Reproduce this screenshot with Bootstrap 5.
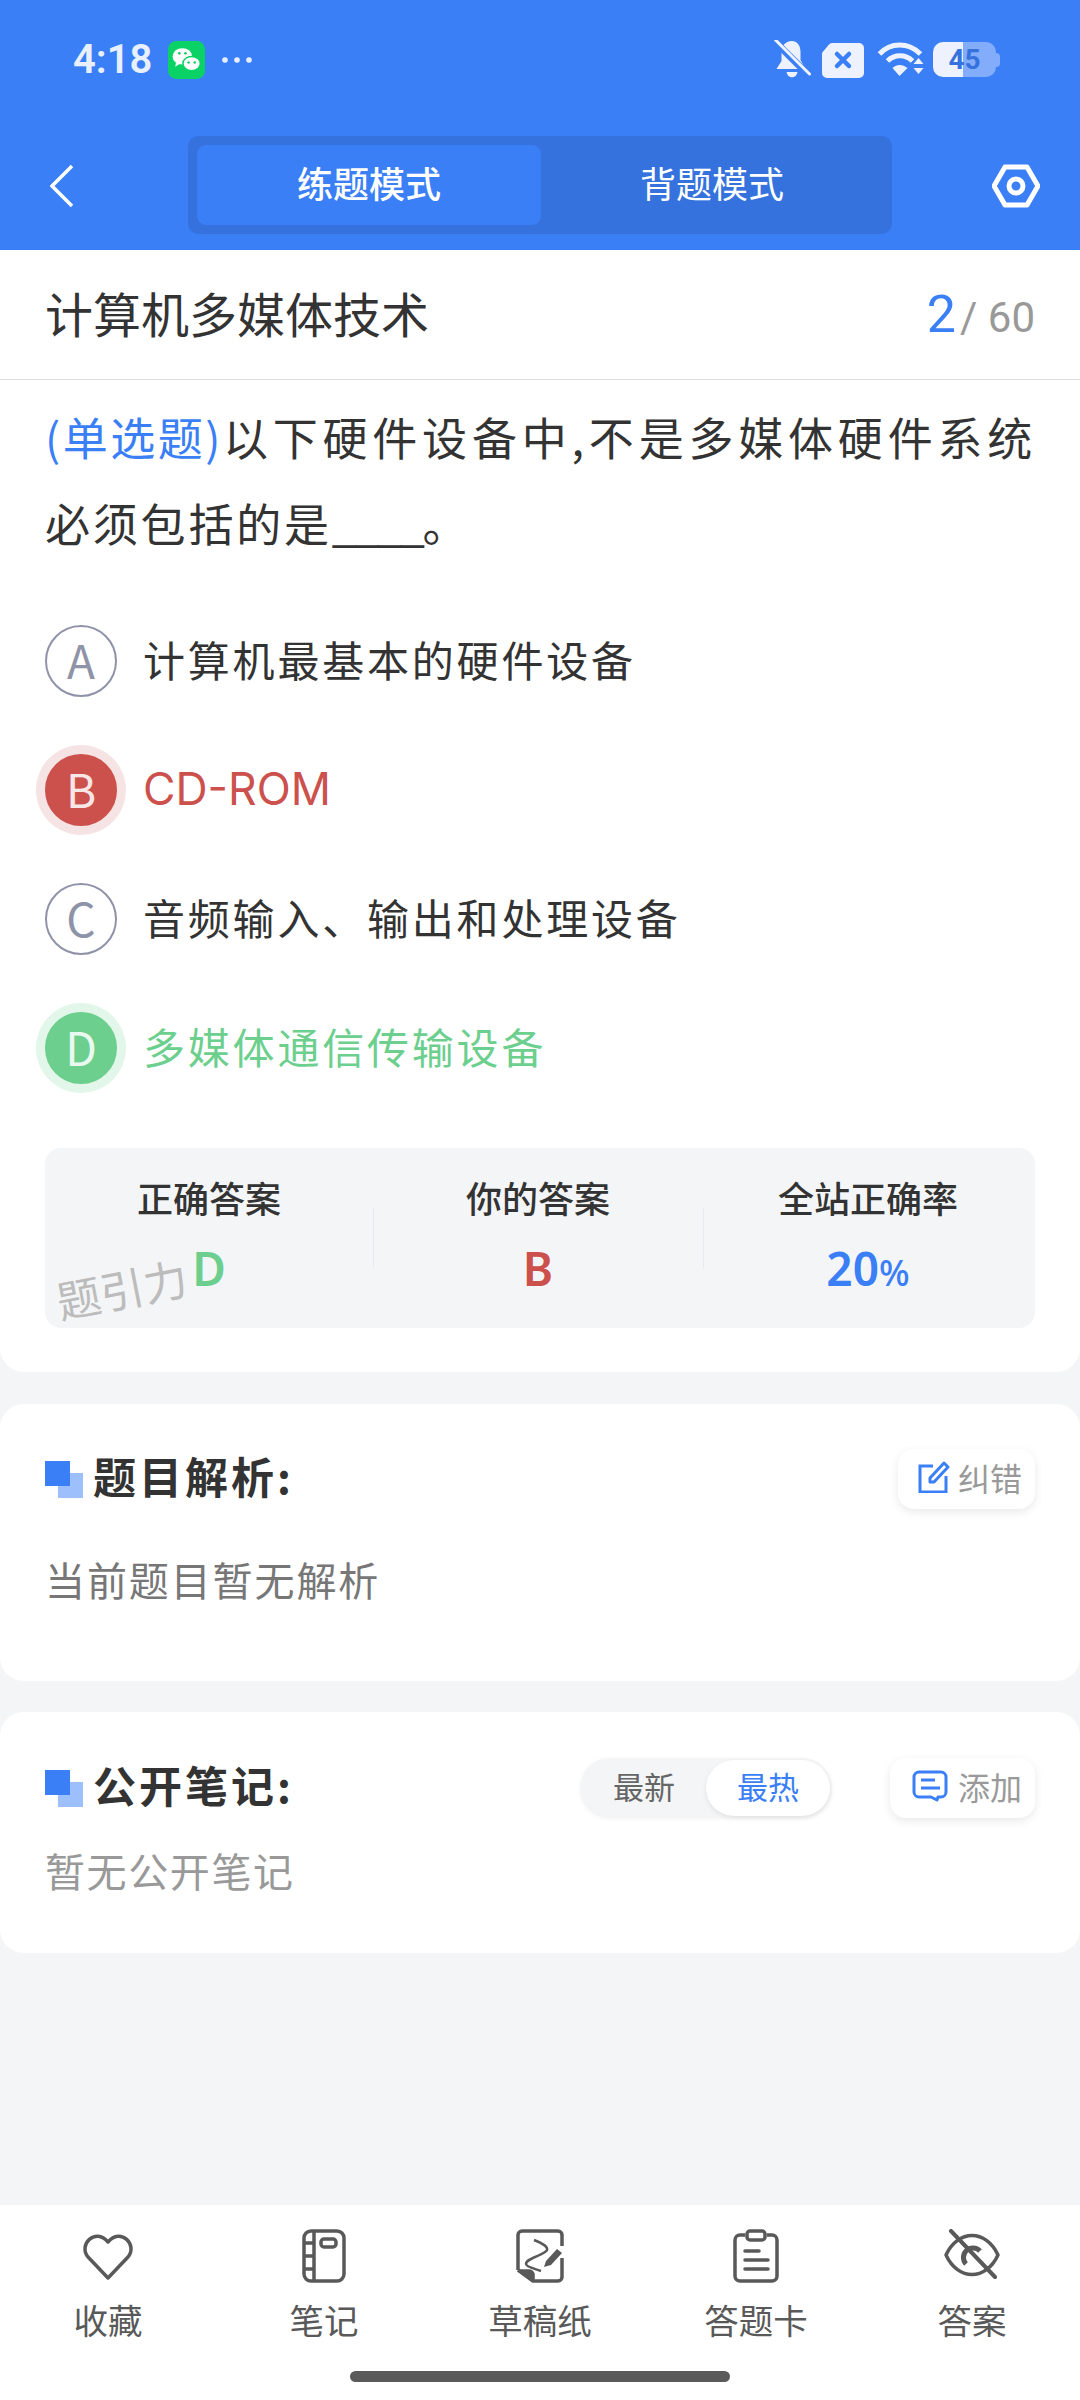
<!DOCTYPE html>
<html lang="zh-CN">
<head>
<meta charset="UTF-8" />
<meta name="viewport" content="width=device-width, initial-scale=1.0" />
<title>计算机多媒体技术</title>
<link href="https://cdn.jsdelivr.net/npm/bootstrap@5.3.0/dist/css/bootstrap.min.css" rel="stylesheet" />
<style>
    body { background: #f4f5f7; font-family: "Noto Sans CJK SC", "Noto Sans", sans-serif; color: #333; }
    .app-page { width: 1080px; min-height: 2400px; }
    .app-head { height: 250px; background: #3b7ff7; color: #fff; }
    .status-row { height: 125px; padding: 0 80px 6px 73px; }
    .status-time { font: 600 40px/1 Roboto, sans-serif; color: #e8effd; width: 95px; }
    .status-sim { margin-left: 11px; }
    .status-wifi { margin-left: 13px; }
    .battery-box { width: 63px; height: 35px; border-radius: 10px; margin-left: 9px; background: linear-gradient(90deg, #edf2fe 47%, #83adfa 47%); color: #3572dd; font: 700 28px/35px Roboto, sans-serif; text-align: center; }
    .battery-nub { width: 4px; height: 14px; background: #83adfa; border-radius: 0 4px 4px 0; }
    .nav-row { height: 125px; padding: 0 40px 4px 50px; }
    .seg-box { width: 704px; height: 98px; margin: 11px 0 0 114px; padding: 9px 9px; background: #3572dd; border-radius: 10px; }
    .seg-item { width: 344px; height: 80px; font-size: 36px; line-height: 74px; text-align: center; border-radius: 9px; }
    .seg-on { background: #3b7ff7; font-weight: 500; }
    .seg-off { width: 342px; }
    .title-row { height: 130px; padding: 0 45px; border-bottom: 1px solid #ddd; }
    .title-text { font-size: 48px; line-height: 1; padding-bottom: 5px; }
    .count-cur { font: 400 52px/1 Roboto, sans-serif; color: #3b7ff7; }
    .count-all { font: 400 42px/1 Roboto, sans-serif; color: #999; margin-left: 4px; }
    .card-one { border-radius: 0 0 24px 24px; padding-bottom: 44px; }
    .ques-text { padding: 14px 0 0 45px; font-size: 45px; line-height: 86px; letter-spacing: 2.8px; margin: 0; white-space: nowrap; }
    .ques-tag { color: #3b7ff7; letter-spacing: 2.500px; }
    .ques-first { letter-spacing: 4.800px; }
    .ques-blank { letter-spacing: -2.500px; }
    .opt-list { margin-top: 30px; }
    .opt-row { height: 129px; padding-left: 45px; }
    .opt-ball { width: 72px; height: 72px; border-radius: 50%; border: 2px solid #8f93a8; color: #8f93a8; font-size: 46px; line-height: 65px; text-align: center; flex: none; margin-right: 26px; }
    .opt-text { font-size: 42px; letter-spacing: 2.8px; padding-bottom: 4px; }
    .ball-red { background: #cc514d; border-color: #cc514d; color: #f8e6e6; box-shadow: 0 0 0 9px #f6e3e4; }
    .ball-green { background: #6ccf8e; border-color: #6ccf8e; color: #e9f9ef; box-shadow: 0 0 0 9px #e2f6ea; }
    .text-wrong { color: #cc514d; }
    .opt-latin { font-family: Inter, sans-serif; font-size: 44.500px; letter-spacing: 0; padding-bottom: 0; }
    .text-right { color: #6ccf8e; }
    .text-rate { color: #3b7ff7; }
    .stat-box { height: 180px; margin: 36px 45px 0; background: #f4f5f7; border-radius: 16px; position: relative; }
    .stat-col { width: 330px; text-align: center; position: relative; }
    .stat-col:first-child { width: 328px; }
    .stat-col + .stat-col::before { content: ""; position: absolute; left: 0; top: 60px; height: 60px; width: 1px; background: #e8e9ec; }
    .stat-label { font-size: 36px; font-weight: 500; line-height: 1; margin-top: 31px; }
    .stat-val { font: 600 46px/1 "Noto Sans", sans-serif; margin-top: 30px; }
    .stat-unit { font-size: 36px; font-weight: 500; }
    .water-mark { position: absolute; left: 16px; top: 130px; font-size: 44px; line-height: 1; color: #bcbcbc; transform: rotate(-11deg); transform-origin: left bottom; }
    .box-card { border-radius: 24px; margin-top: 32px; padding: 0 45px; }
    .card-two { height: 277px; }
    .card-three { height: 241px; margin-top: 31px; }
    .sec-head { height: 60px; margin-top: 45px; }
    .card-three .sec-head { margin-top: 46px; }
    .sec-icon { width: 38px; height: 37px; position: relative; flex: none; margin-right: 10px; }
    .sec-icon::before { content: ""; position: absolute; right: 0; bottom: 0; width: 25px; height: 25px; background: #9dbffb; }
    .sec-icon::after { content: ""; position: absolute; left: 0; top: 0; width: 25px; height: 25px; background: #3b7ff7; }
    .sec-title { font-size: 43px; font-weight: 600; letter-spacing: 3px; padding-bottom: 7px; }
    .tip-btn { height: 60px; border-radius: 16px; background: #fff; box-shadow: 0 3px 10px rgba(0,0,0,.09); font-size: 32px; color: #999; padding: 0 13px 4px 20px; gap: 8px; }
    .tip-add { padding-left: 22px; gap: 10px; }
    .sort-pill { width: 252px; height: 60px; border-radius: 30px; background: #f4f5f7; margin-right: 58px; padding: 2px; font-size: 31px; color: #666; box-shadow: 0 1px 4px rgba(0,0,0,.05); }
    .sort-item { width: 125px; line-height: 52px; height: 56px; text-align: center; border-radius: 28px; }
    .sort-on { background: #fff; color: #3b7ff7; box-shadow: 0 2px 5px rgba(0,0,0,.08); }
    .tip-text { font-size: 40px; line-height: 1; color: #777; margin-top: 50px; letter-spacing: 1.900px; }
    .tip-empty { font-size: 40px; line-height: 1; color: #999; margin-top: 32px; letter-spacing: 1.600px; }
    .foot-bar { height: 195px; background: #fff; padding-top: 24px; position: relative; }
    .foot-item { width: 216px; text-align: center; font-size: 34.500px; line-height: 1; color: #595959; }
    .foot-item svg { display: block; margin: 0 auto 19px; }
    .home-line { position: absolute; left: 350px; top: 166px; width: 380px; height: 11px; background: #5a5a5a; border-radius: 6px; }
</style>
</head>
<body class="m-0">
<div class="app-page d-flex flex-column">

    <div class="app-head">
        <div class="status-row d-flex align-items-center">
            <span class="status-time">4:18</span>
            <svg width="37" height="38" viewBox="0 0 36 37">
                <rect width="36" height="37" rx="8" fill="#0bd266"/>
                <ellipse cx="14" cy="15" rx="9.500" ry="8" fill="#fff"/>
                <path d="M8 20l-1 5 5-3z" fill="#fff"/>
                <ellipse cx="23" cy="22" rx="8.500" ry="7" fill="#fff" stroke="#0bd266" stroke-width="1.500"/>
                <circle cx="11" cy="12" r="1.300" fill="#0bd266"/><circle cx="17" cy="12" r="1.300" fill="#0bd266"/>
                <circle cx="20" cy="21" r="1.200" fill="#0bd266"/><circle cx="26" cy="21" r="1.200" fill="#0bd266"/>
            </svg>
            <svg class="ms-3" width="32" height="8" viewBox="0 0 32 8" fill="#e8effd">
                <circle cx="4" cy="4" r="2.800"/><circle cx="16" cy="4" r="2.800"/><circle cx="28" cy="4" r="2.800"/>
            </svg>
            <div class="flex-grow-1"></div>
            <svg width="38" height="40" viewBox="0 0 37 40">
                <path d="M18 1c7 0 9 6 9 11v8l5 9H3l5-8V12c0-6 4-11 10-11z" fill="#edf2fe"/>
                <path d="M13 32h11c-1 7-10 7-11 0z" fill="#edf2fe"/>
                <path d="M0 0L36 36" stroke="#3b7ff7" stroke-width="7"/>
                <path d="M2 0L36 34" stroke="#edf2fe" stroke-width="3" stroke-linecap="round"/>
            </svg>
            <svg class="status-sim" width="42" height="36" viewBox="0 0 42 36">
                <path d="M10 1h27a5 5 0 0 1 5 5v25a5 5 0 0 1-5 5H5a5 5 0 0 1-5-5V12a4 4 0 0 1 1.500-3L7 2.500A4 4 0 0 1 10 1z" fill="#edf2fe"/>
                <path d="M15 12l12 12M27 12L15 24" stroke="#3b7ff7" stroke-width="4.500" stroke-linecap="round"/>
            </svg>
            <svg class="status-wifi" width="47" height="36" viewBox="0 0 46 36" fill="none" stroke="#edf2fe" stroke-width="5">
                <path d="M2 12C13 0 31 0 43 12"/>
                <path d="M10 19c7-7 18-7 25 0"/>
                <path d="M15 26c4-4 10-4 15 0l-8 8z" fill="#edf2fe" stroke="none"/>
                <path d="M36 22l5-6 5 6zM36 26h10l-5 6z" fill="#edf2fe" stroke="none"/>
            </svg>
            <div class="battery-box">45</div>
            <div class="battery-nub"></div>
        </div>
        <div class="nav-row d-flex align-items-center">
            <svg width="24" height="44" viewBox="0 0 24 44" fill="none" stroke="#fff" stroke-width="3.500"><path d="M22 2L2 22l20 20"/></svg>
            <div class="seg-box d-flex align-self-start">
                <div class="seg-item seg-on">练题模式</div>
                <div class="seg-item seg-off">背题模式</div>
            </div>
            <div class="flex-grow-1"></div>
            <svg width="48" height="44" viewBox="0 0 48 44" fill="none" stroke="#fff" stroke-width="5" stroke-linejoin="round"><path d="M13 3h22l11 19-11 19H13L2 22z"/><circle cx="24" cy="22" r="7"/></svg>
        </div>
    </div>

    <div class="card-one bg-white">
        <div class="title-row d-flex align-items-center justify-content-between">
            <span class="title-text">计算机多媒体技术</span>
            <span><span class="count-cur">2</span><span class="count-all">/ 60</span></span>
        </div>
        <p class="ques-text"><span class="ques-tag">(单选题)</span><span class="ques-first">以下硬件设备中,不是多媒体硬件系统</span><br />必须包括的是<span class="ques-blank">____</span>。</p>
        <div class="opt-list">
            <div class="opt-row d-flex align-items-center"><div class="opt-ball">A</div><span class="opt-text">计算机最基本的硬件设备</span></div>
            <div class="opt-row d-flex align-items-center"><div class="opt-ball ball-red">B</div><span class="opt-text text-wrong opt-latin">CD-ROM</span></div>
            <div class="opt-row d-flex align-items-center"><div class="opt-ball">C</div><span class="opt-text">音频输入、输出和处理设备</span></div>
            <div class="opt-row d-flex align-items-center"><div class="opt-ball ball-green">D</div><span class="opt-text text-right">多媒体通信传输设备</span></div>
        </div>
        <div class="stat-box d-flex">
            <div class="stat-col"><div class="stat-label">正确答案</div><div class="stat-val text-right">D</div></div>
            <div class="stat-col"><div class="stat-label">你的答案</div><div class="stat-val text-wrong">B</div></div>
            <div class="stat-col"><div class="stat-label">全站正确率</div><div class="stat-val text-rate">20<span class="stat-unit">%</span></div></div>
            <div class="water-mark">题引力</div>
        </div>
    </div>

    <div class="box-card card-two bg-white">
        <div class="sec-head d-flex align-items-center justify-content-between">
            <div class="d-flex align-items-center"><span class="sec-icon"></span><span class="sec-title">题目解析:</span></div>
            <div class="tip-btn d-flex align-items-center">
                <svg width="32" height="32" viewBox="0 0 32 32" fill="none" stroke="#3b7ff7" stroke-width="3"><path d="M15 5H2v26h26V15"/><path d="M12 17L26 2l4 4-14 15h-4z" stroke-linejoin="round"/></svg>
                纠错
            </div>
        </div>
        <div class="tip-text">当前题目暂无解析</div>
    </div>

    <div class="box-card card-three bg-white">
        <div class="sec-head d-flex align-items-center">
            <span class="sec-icon"></span><span class="sec-title">公开笔记:</span>
            <div class="flex-grow-1"></div>
            <div class="sort-pill d-flex"><div class="sort-item">最新</div><div class="sort-item sort-on">最热</div></div>
            <div class="tip-btn tip-add d-flex align-items-center">
                <svg width="36" height="32" viewBox="0 0 36 32" fill="none" stroke="#3b7ff7" stroke-width="3" stroke-linejoin="round"><path d="M7 2h22a5 5 0 0 1 5 5v15a5 5 0 0 1-5 5h-3l-1 3-6-3H7a5 5 0 0 1-5-5V7a5 5 0 0 1 5-5z"/><path d="M9 10h14M9 18h19"/></svg>
                添加
            </div>
        </div>
        <div class="tip-empty">暂无公开笔记</div>
    </div>

    <div class="flex-grow-1"></div>

    <div class="foot-bar d-flex">
        <div class="foot-item">
            <svg width="54" height="54" viewBox="0 0 54 54" fill="none" stroke="#595959" stroke-width="3.500" stroke-linejoin="round"><path d="M27 49L7 28C-3 16 14-2 27 13 40-2 57 16 47 28z"/></svg>
            收藏
        </div>
        <div class="foot-item">
            <svg width="44" height="54" viewBox="0 0 44 54" fill="none" stroke="#595959" stroke-width="3.500"><rect x="2" y="2" width="40" height="50" rx="7"/><path d="M12 2v50M2 14h10M2 27h10M2 40h10"/><rect x="19" y="10" width="15" height="8" rx="3"/></svg>
            笔记
        </div>
        <div class="foot-item">
            <svg width="48" height="54" viewBox="0 0 48 54" fill="none" stroke="#595959" stroke-width="3.500" stroke-linejoin="round"><path d="M2 41V6a4 4 0 0 1 4-4h36a4 4 0 0 1 4 4v11M46 29v19a4 4 0 0 1-4 4H17L2 41"/><path d="M4 42h9a4 4 0 0 1 4 5v4z" fill="#595959"/><path d="M18 11c8 3 14 7 13 10-2 5-21 8-21 14 0 3 10 5 15 7" stroke-width="2.500"/><path d="M30 32l11-12 5 4-11 12-7 2z" fill="#595959" stroke="none"/></svg>
            草稿纸
        </div>
        <div class="foot-item">
            <svg width="46" height="54" viewBox="0 0 46 54" fill="none" stroke="#595959" stroke-width="3.500"><path d="M12 6H7a5 5 0 0 0-5 5v36a5 5 0 0 0 5 5h32a5 5 0 0 0 5-5V11a5 5 0 0 0-5-5h-5"/><rect x="14" y="2" width="18" height="9" rx="3"/><path d="M12 22h14M12 31h23M12 40h23" stroke-linecap="round"/></svg>
            答题卡
        </div>
        <div class="foot-item">
            <svg width="56" height="54" viewBox="0 0 56 54" fill="none" stroke="#595959" stroke-width="3.500"><path d="M2 26C14 0 42 0 54 26 42 52 14 52 2 26z" stroke-linejoin="round"/><path d="M36 22a9 9 0 1 0-14 13" stroke-width="5"/><path d="M7 2l44 46" stroke-width="4" stroke-linecap="round"/></svg>
            答案
        </div>
        <div class="home-line"></div>
    </div>
</div>
<script src="https://cdn.jsdelivr.net/npm/bootstrap@5.3.0/dist/js/bootstrap.bundle.min.js"></script>
</body>
</html>
